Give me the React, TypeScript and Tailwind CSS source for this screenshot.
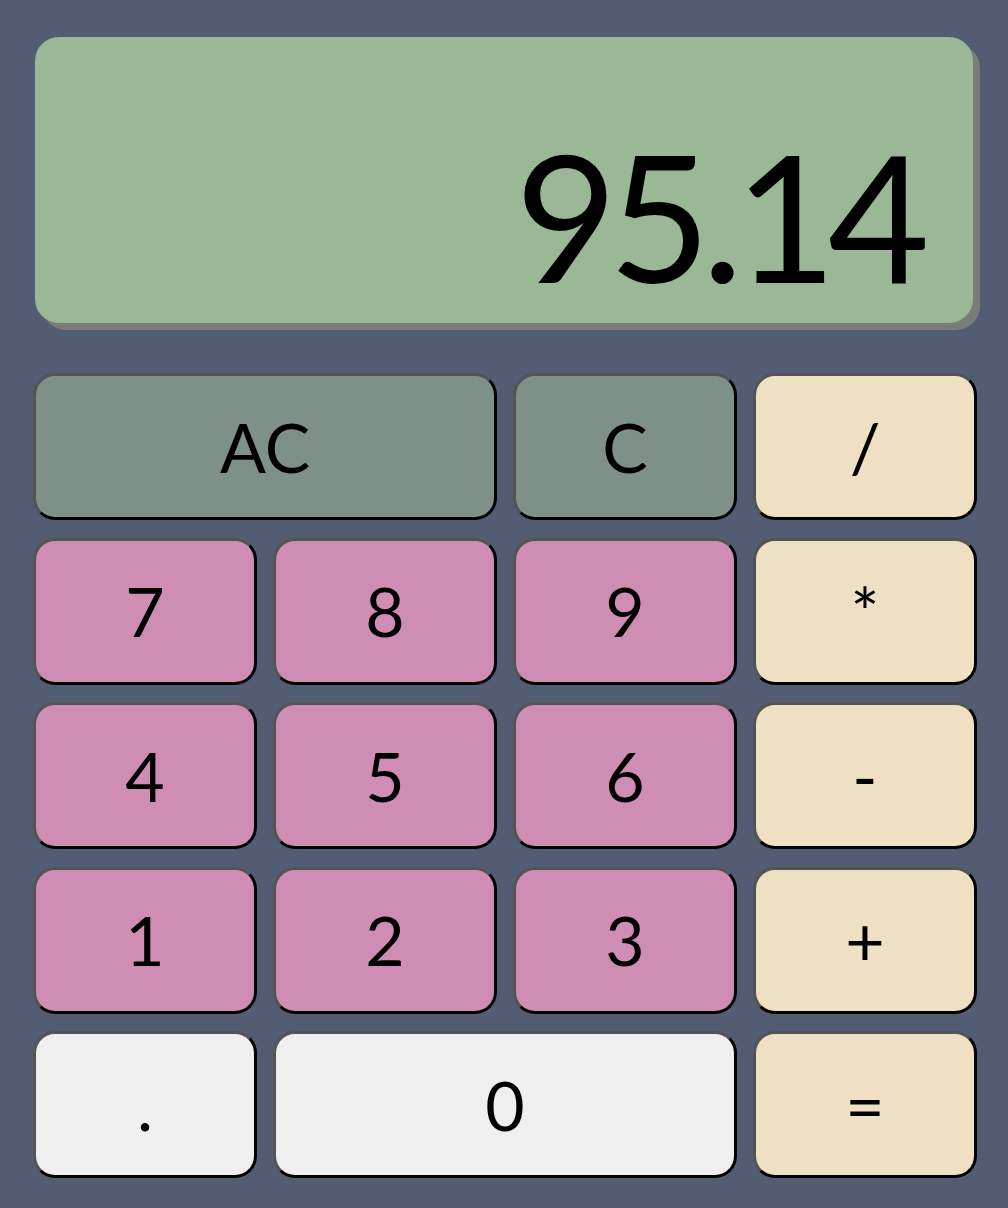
const keys: { label: string; kind: "clear" | "op" | "num" | "light"; wide?: boolean }[] = [
  { label: "AC", kind: "clear", wide: true },
  { label: "C", kind: "clear" },
  { label: "/", kind: "op" },
  { label: "7", kind: "num" },
  { label: "8", kind: "num" },
  { label: "9", kind: "num" },
  { label: "*", kind: "op" },
  { label: "4", kind: "num" },
  { label: "5", kind: "num" },
  { label: "6", kind: "num" },
  { label: "-", kind: "op" },
  { label: "1", kind: "num" },
  { label: "2", kind: "num" },
  { label: "3", kind: "num" },
  { label: "+", kind: "op" },
  { label: ".", kind: "light" },
  { label: "0", kind: "light", wide: true },
  { label: "=", kind: "op" },
];

const colors = {
  clear: "bg-[#7d9189]",
  op: "bg-[#efe0c4]",
  num: "bg-[#cf8db4]",
  light: "bg-[#efefef]",
};

export default function App() {
  return (
    <div
      className="min-h-screen bg-[#525d74] pt-[37px] pl-[33px]"
      style={{ fontFamily: "Lato, 'Open Sans', sans-serif" }}
    >
      {/* screen */}
      <div className="ml-[2px] flex h-[286px] w-[938px] items-end justify-end rounded-[24px] bg-[#9ab896] pb-[20px] pr-[52px] shadow-[7px_7px_0_#7b7b7b]">
        <span className="text-[176px] leading-none tracking-[-0.05em] text-black">95.14</span>
      </div>

      {/* keypad */}
      <div className="mt-[50px] grid grid-cols-[repeat(4,224px)] auto-rows-[147px] gap-x-4 gap-y-[17.5px]">
        {keys.map((k) => (
          <button
            key={k.label}
            className={`${colors[k.kind]} ${k.wide ? "col-span-2" : ""} flex items-center justify-center rounded-[22px] border-[3px] border-t-[#545454] border-l-[#545454] border-b-black border-r-black text-[68px] leading-none text-black`}
          >
            {k.label}
          </button>
        ))}
      </div>
    </div>
  );
}
